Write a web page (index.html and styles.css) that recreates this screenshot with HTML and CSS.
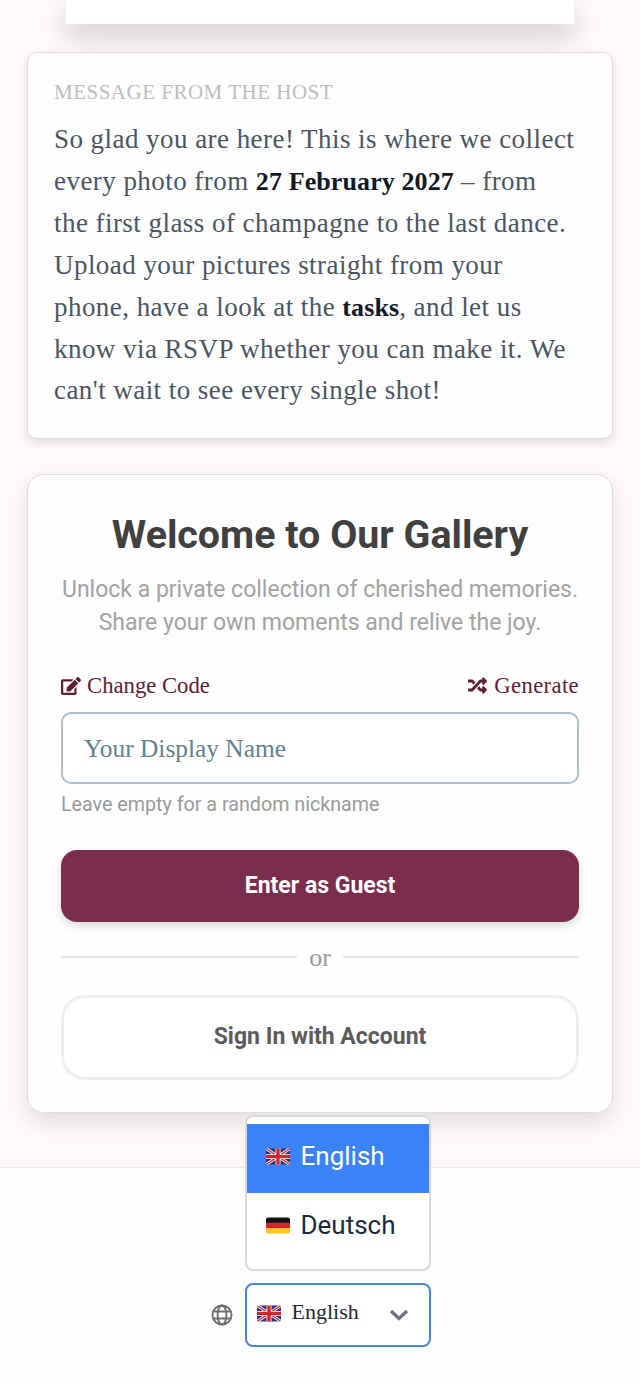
FILE: index.html
```html
<!DOCTYPE html>
<html lang="en">

<head>
    <meta charset="UTF-8">
    <meta name="viewport" content="width=device-width, initial-scale=1.0">
    <title>Welcome to Our Gallery</title>
    <link rel="stylesheet" href="styles.css">
</head>

<body>
    <svg class="defs" width="0" height="0">
        <symbol id="flag-uk" viewBox="0 0 24 16">
            <rect width="24" height="16" fill="#27337a" />
            <path d="M0 0 24 16M24 0 0 16" stroke="#fff" stroke-width="3" />
            <path d="M0 0 24 16M24 0 0 16" stroke="#d2232f" stroke-width="1.3" />
            <path d="M12 0V16M0 8H24" stroke="#fff" stroke-width="5" />
            <path d="M12 0V16M0 8H24" stroke="#d2232f" stroke-width="3.4" />
        </symbol>
        <symbol id="flag-de" viewBox="0 0 24 16">
            <rect width="24" height="5.4" fill="#111" />
            <rect y="5.4" width="24" height="5.3" fill="#d8232a" />
            <rect y="10.7" width="24" height="5.3" fill="#fcc419" />
        </symbol>
    </svg>

    <main class="content">
        <div class="hero"></div>

        <section class="card message">
            <h2 class="message-label">MESSAGE FROM THE HOST</h2>
            <p class="message-text">So glad you are here! This is where we collect every photo from <strong>27 February 2027</strong> – from the first glass of champagne to the last dance. Upload your pictures straight from your phone, have a look at the <strong>tasks</strong>, and let us know via RSVP whether you can make it. We can't wait to see every single shot!</p>
        </section>

        <section class="card login">
            <h1 class="login-title">Welcome to Our Gallery</h1>
            <p class="login-sub">Unlock a private collection of cherished memories. Share your own moments and relive the joy.</p>

            <div class="name-actions">
                <a class="name-action">
                    <svg class="icon-edit" viewBox="0 0 576 512"><path d="M402.6 83.2l90.2 90.2c3.8 3.8 3.8 10 0 13.8L274.4 405.6l-92.8 10.3c-12.4 1.4-22.9-9.1-21.5-21.5l10.3-92.8L388.8 83.2c3.8-3.8 10-3.8 13.8 0zm162-22.9l-48.8-48.8c-15.2-15.2-39.9-15.2-55.2 0l-35.4 35.4c-3.8 3.8-3.8 10 0 13.8l90.2 90.2c3.8 3.8 10 3.8 13.8 0l35.4-35.4c15.2-15.3 15.2-40 0-55.2zM384 346.2V448H64V128h229.8c3.2 0 6.2-1.3 8.5-3.5l40-40c7.6-7.6 2.2-20.5-8.5-20.5H48C21.5 64 0 85.5 0 112v352c0 26.5 21.5 48 48 48h352c26.5 0 48-21.5 48-48V306.2c0-10.7-12.9-16-20.5-8.5l-40 40c-2.2 2.3-3.5 5.3-3.5 8.5z" /></svg>
                    Change Code
                </a>
                <a class="name-action">
                    <svg class="icon-random" viewBox="0 0 512 512"><path d="M504.971 359.029c9.373 9.373 9.373 24.569 0 33.941l-80 79.984c-15.01 15.01-40.971 4.49-40.971-16.971V416h-58.785a12.004 12.004 0 0 1-8.773-3.812l-70.556-75.596 53.333-57.143L352 336h32v-39.981c0-21.438 25.943-31.998 40.971-16.971l80 79.981zM12 176h84l52.781 56.551 53.333-57.143-70.556-75.596A11.999 11.999 0 0 0 122.785 96H12c-6.627 0-12 5.373-12 12v56c0 6.627 5.373 12 12 12zm372 0v39.984c0 21.46 25.961 31.98 40.971 16.971l80-79.984c9.373-9.373 9.373-24.569 0-33.941l-80-79.981C409.943 24.021 384 34.582 384 56.019V96h-58.785a12.004 12.004 0 0 0-8.773 3.812L96 336H12c-6.627 0-12 5.373-12 12v56c0 6.627 5.373 12 12 12h110.785c3.326 0 6.503-1.381 8.773-3.812L352 176h32z" /></svg>
                    Generate
                </a>
            </div>

            <input class="name-input" type="text" placeholder="Your Display Name">
            <p class="name-hint">Leave empty for a random nickname</p>

            <button class="btn btn-guest">Enter as Guest</button>

            <div class="divider"><span>or</span></div>

            <button class="btn btn-account">Sign In with Account</button>
        </section>
    </main>

    <footer class="footer">
        <svg class="globe" viewBox="0 0 24 24" fill="none" stroke="#6f6f6f" stroke-width="2">
            <circle cx="12" cy="12" r="10.4" />
            <ellipse cx="12" cy="12" rx="4.8" ry="10.4" />
            <path d="M2.8 8.2H21.2M2.8 15.8H21.2" />
        </svg>
        <div class="lang">
            <ul class="lang-menu">
                <li class="lang-option active">
                    <svg class="flag"><use href="#flag-uk" /></svg>
                    English
                </li>
                <li class="lang-option">
                    <svg class="flag"><use href="#flag-de" /></svg>
                    Deutsch
                </li>
            </ul>
            <div class="lang-select">
                <svg class="flag"><use href="#flag-uk" /></svg>
                <span class="lang-current">English</span>
                <svg class="chevron" viewBox="0 0 20 12" fill="none" stroke="#6b7280" stroke-width="3.4">
                    <path d="M2 2 10 9.5 18 2" />
                </svg>
            </div>
        </div>
    </footer>
</body>

</html>
```

FILE: styles.css
```css
* {
    box-sizing: border-box;
}

body {
    margin: 0;
    height: 1385px;
    overflow: hidden;
    background-color: #fff8f9;
    font-family: 'Liberation Serif', serif;
}

.defs {
    position: absolute;
}

.content {
    padding: 0 27px;
}

.hero {
    height: 24px;
    margin: 0 39px;
    background-color: #ffffff;
    box-shadow: 0 12px 28px rgba(0, 0, 0, 0.18);
}

.card {
    background-color: rgba(255, 255, 255, 0.8);
    border: 1px solid #dfdddd;
    box-shadow: 0 4px 10px rgba(0, 0, 0, 0.1);
}

.message {
    margin-top: 28px;
    padding: 26px 36px 26px 26px;
    border-radius: 10px;
    height: 387px;
}

.message-label {
    margin: 0;
    font-size: 21px;
    line-height: 26px;
    font-weight: 400;
    letter-spacing: 0.5px;
    color: #bdbdbd;
}

.message-text {
    margin: 14px 0 0;
    font-size: 27px;
    line-height: 41.9px;
    letter-spacing: 0.45px;
    color: #4b5563;
}

.message-text strong {
    font-size: 26px;
    letter-spacing: 0.1px;
    color: #111827;
}

.login {
    margin-top: 35px;
    height: 639px;
    padding: 33px 33px 0;
    border-radius: 16px;
    box-shadow: 0 10px 22px rgba(0, 0, 0, 0.1);
}

.login-title {
    margin: 0;
    font-family: Roboto, sans-serif;
    font-size: 39.4px;
    line-height: 54px;
    font-weight: 700;
    text-align: center;
    color: #404040;
}

.login-sub {
    margin: 11px 0 0;
    font-family: Roboto, sans-serif;
    font-size: 23px;
    line-height: 33px;
    text-align: center;
    color: #a3a3a3;
}

.name-actions {
    display: flex;
    justify-content: space-between;
    margin-top: 30px;
}

.name-action {
    display: flex;
    align-items: center;
    gap: 6px;
    font-size: 22.7px;
    line-height: 33px;
    color: #5e1f38;
}

.name-action:last-child {
    letter-spacing: 0.35px;
}

.icon-edit {
    width: 20px;
    height: 18px;
    fill: #5e1f38;
}

.icon-random {
    width: 21px;
    height: 19px;
    fill: #5e1f38;
}

.name-input {
    display: block;
    width: 100%;
    height: 72px;
    margin-top: 10px;
    padding: 0 21px;
    border: 2px solid #aebfc8;
    border-radius: 10px;
    background-color: #ffffff;
    font-family: inherit;
    font-size: 25.4px;
}

.name-input::placeholder {
    color: #63808f;
    opacity: 1;
}

.name-hint {
    margin: 7px 0 0;
    font-family: Roboto, sans-serif;
    font-size: 19.7px;
    line-height: 27px;
    color: #9a9a9a;
}

.btn {
    display: block;
    width: 100%;
    padding-bottom: 3px;
    font-family: Roboto, sans-serif;
    font-size: 23px;
    font-weight: 700;
    text-align: center;
}

.btn-guest {
    height: 72px;
    margin-top: 32px;
    border: none;
    border-radius: 16px;
    background-color: #7b2d4d;
    color: #ffffff;
    box-shadow: 0 4px 8px rgba(0, 0, 0, 0.14);
}

.divider {
    display: flex;
    align-items: center;
    gap: 12px;
    height: 32px;
    margin-top: 20px;
    font-size: 26px;
    color: #9a9a9a;
}

.divider::before,
.divider::after {
    content: "";
    flex: 1;
    height: 2px;
    margin-top: -3px;
    background-color: #e5e5e5;
}

.btn-account {
    height: 85px;
    margin-top: 21px;
    border: 3px solid #efefef;
    border-radius: 24px;
    background-color: #ffffff;
    color: #5c5c5c;
}

.footer {
    display: flex;
    justify-content: center;
    align-items: center;
    gap: 12px;
    height: 218px;
    margin-top: 54px;
    padding: 115px 0 38px 1px;
    border-top: 1px solid #eeeaea;
    background-color: #fffefe;
}

.globe {
    width: 22px;
    height: 22px;
}

.lang {
    position: relative;
    width: 186px;
}

.flag {
    flex: none;
    width: 24px;
    height: 17px;
    border-radius: 3px;
}

.lang-select {
    display: flex;
    align-items: center;
    height: 64px;
    padding: 0 20px 4px 10px;
    border: 2px solid #4a86d8;
    border-radius: 8px;
    background-color: #ffffff;
    font-size: 22px;
    color: #1f2937;
}

.lang-current {
    flex: 1;
    margin-left: 11px;
    padding-bottom: 3px;
}

.chevron {
    width: 20px;
    height: 12px;
    margin-top: 4px;
}

/* dropdown opens above the select */
.lang-menu {
    position: absolute;
    left: 0;
    right: 0;
    bottom: 76px;
    height: 156px;
    margin: 0;
    padding: 7px 0 0;
    list-style: none;
    border: 2px solid #d9d9d9;
    border-radius: 8px;
    background-color: #ffffff;
}

.lang-option {
    display: flex;
    align-items: center;
    gap: 11px;
    height: 69px;
    padding: 0 0 5px 19px;
    font-family: Roboto, sans-serif;
    font-size: 26px;
    color: #1f2937;
}

.lang-option.active {
    background-color: #3b82f6;
    color: #ffffff;
}
```
